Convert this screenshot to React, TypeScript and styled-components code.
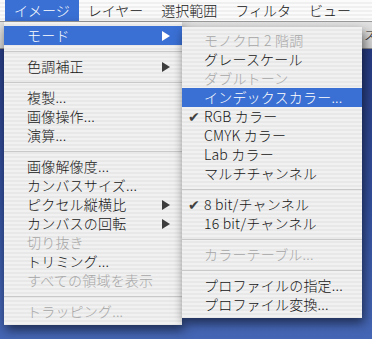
import React from "react"
import styled, { createGlobalStyle, css } from "styled-components"

const GlobalStyle = createGlobalStyle`
  html, body {
    margin: 0;
    padding: 0;
    background: #3b58a5;
  }
  body {
    font-family: "Noto Sans CJK JP", "Liberation Sans", sans-serif;
    font-weight: 300;
    -webkit-font-smoothing: antialiased;
  }
`

const stripes = css`
  background: repeating-linear-gradient(
    to bottom,
    #f1f1f1 0px,
    #f1f1f1 2px,
    #e8e8e8 2px,
    #e8e8e8 4px
  );
`

const Screen = styled.div`
  position: relative;
  width: 372px;
  height: 339px;
  overflow: hidden;
  display: flex;
  flex-direction: column;
  background: linear-gradient(to bottom, #23357a 0%, #34509c 60%, #4566b4 100%);
`

const MenuBar = styled.div`
  height: 21px;
  display: flex;
  align-items: stretch;
  padding-left: 5px;
  border-bottom: 1px solid #9a9a9a;
  background: repeating-linear-gradient(
    to bottom,
    #fbfbfb 0px,
    #fbfbfb 2px,
    #f0f0f0 2px,
    #f0f0f0 4px
  );
`

const BarItem = styled.div<{ $active?: boolean }>`
  padding: 0 9px;
  font-size: 14px;
  line-height: 21px;
  color: ${p => (p.$active ? "#ffffff" : "#151515")};
  background: ${p => (p.$active ? "#3a6fd3" : "transparent")};
  white-space: nowrap;
`

const OptionsBar = styled.div`
  height: 26px;
  display: flex;
  align-items: center;
  justify-content: flex-end;
  background: linear-gradient(to bottom, #e2e2e2, #cfcfcf);
  border-bottom: 1px solid #8a8a8a;
  font-size: 12px;
  color: #222;
`

const OptionsLabel = styled.span`
  margin-right: -4px;
  line-height: 26px;
`

const Desktop = styled.div`
  flex: 1;
`

const Menu = styled.div<{ $left: number; $top: number; $width: number }>`
  position: absolute;
  left: ${p => p.$left}px;
  top: ${p => p.$top}px;
  width: ${p => p.$width}px;
  padding: 4px 0;
  ${stripes};
  box-shadow: 2px 5px 10px rgba(0, 0, 0, 0.55);
  display: flex;
  flex-direction: column;
`

const Row = styled.div<{ $hl?: boolean; $off?: boolean; $pad: number }>`
  position: relative;
  height: 19px;
  line-height: 19px;
  font-size: 14px;
  letter-spacing: 0.2px;
  padding-left: ${p => p.$pad}px;
  white-space: nowrap;
  color: ${p => (p.$hl ? "#ffffff" : p.$off ? "#a6a6a6" : "#151515")};
  background: ${p => (p.$hl ? "#3a6fd3" : "transparent")};
`

const Check = styled.span`
  position: absolute;
  left: 6px;
  top: 0;
  font-size: 14px;
  color: #404040;
`

const Arrow = styled.span<{ $hl?: boolean }>`
  position: absolute;
  right: 12px;
  top: 5px;
  width: 0;
  height: 0;
  border-top: 5px solid transparent;
  border-bottom: 5px solid transparent;
  border-left: 8px solid ${p => (p.$hl ? "#ffffff" : "#3c3c3c")};
`

const Sep = styled.div`
  height: 12px;
  display: flex;
  align-items: center;
  &::after {
    content: "";
    flex: 1;
    height: 1px;
    background: #c9c9c9;
  }
`

type Item =
  | { sep: true }
  | { label: string; off?: boolean; hl?: boolean; sub?: boolean; check?: boolean; sep?: false }

const mainItems: Item[] = [
  { label: "モード", hl: true, sub: true },
  { sep: true },
  { label: "色調補正", sub: true },
  { sep: true },
  { label: "複製..." },
  { label: "画像操作..." },
  { label: "演算..." },
  { sep: true },
  { label: "画像解像度..." },
  { label: "カンバスサイズ..." },
  { label: "ピクセル縦横比", sub: true },
  { label: "カンバスの回転", sub: true },
  { label: "切り抜き", off: true },
  { label: "トリミング..." },
  { label: "すべての領域を表示", off: true },
  { sep: true },
  { label: "トラッピング...", off: true },
]

const modeItems: Item[] = [
  { label: "モノクロ 2 階調", off: true },
  { label: "グレースケール" },
  { label: "ダブルトーン", off: true },
  { label: "インデックスカラー...", hl: true },
  { label: "RGB カラー", check: true },
  { label: "CMYK カラー" },
  { label: "Lab カラー" },
  { label: "マルチチャンネル" },
  { sep: true },
  { label: "8 bit/チャンネル", check: true },
  { label: "16 bit/チャンネル" },
  { sep: true },
  { label: "カラーテーブル...", off: true },
  { sep: true },
  { label: "プロファイルの指定..." },
  { label: "プロファイル変換..." },
]

const renderItems = (items: Item[], pad: number) =>
  items.map((it, i) =>
    it.sep ? (
      <Sep key={i} />
    ) : (
      <Row key={i} $hl={it.hl} $off={it.off} $pad={pad}>
        {it.check && <Check>✔</Check>}
        {it.label}
        {it.sub && <Arrow $hl={it.hl} />}
      </Row>
    )
  )

const App = () => {
  return (
    <Screen>
      <GlobalStyle />
      <MenuBar>
        <BarItem $active>イメージ</BarItem>
        <BarItem>レイヤー</BarItem>
        <BarItem>選択範囲</BarItem>
        <BarItem>フィルタ</BarItem>
        <BarItem>ビュー</BarItem>
      </MenuBar>
      <OptionsBar>
        <OptionsLabel>ス</OptionsLabel>
      </OptionsBar>
      <Desktop />

      <Menu $left={4} $top={22} $width={178}>
        {renderItems(mainItems, 23)}
      </Menu>
      <Menu $left={182} $top={27} $width={180}>
        {renderItems(modeItems, 22)}
      </Menu>
    </Screen>
  )
}

export default App
